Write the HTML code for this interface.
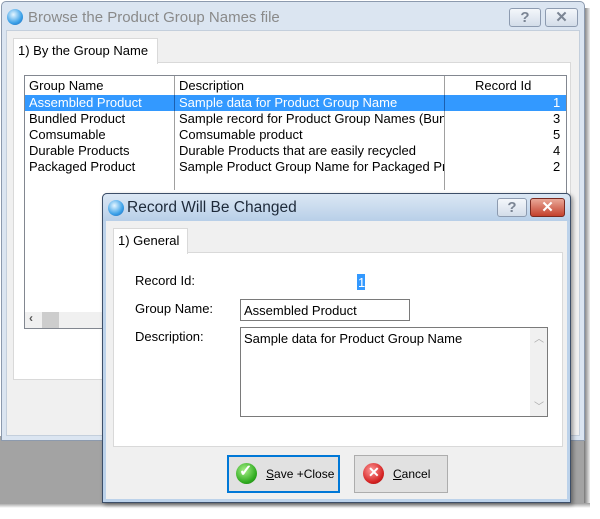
<!DOCTYPE html>
<html><head><style>
body{margin:0;width:600px;height:519px;background:#fff;position:relative;overflow:hidden;font-family:"Liberation Sans",sans-serif;font-size:13px;color:#000}
.a{position:absolute;box-sizing:border-box}
.t{position:absolute;white-space:nowrap}
.btn{position:absolute;box-sizing:border-box;border:1px solid #8d9bb0;border-radius:3px;background:linear-gradient(#f4f7fb,#d3dde9);color:#7b8594;font-weight:bold;text-align:center;font-size:15px;line-height:17px}
.cls{background:linear-gradient(#e9a898,#c4412c);border-color:#7a2a20;color:#fff}
</style></head><body>
<div class="a" style="left:0;top:436px;width:590px;height:67px;background:#a3a3a3"></div>
<div class="a" style="left:584px;top:8px;width:6px;height:495px;background:linear-gradient(90deg,#777,#eee)"></div>
<div class="a" style="left:0;top:503px;width:590px;height:5px;background:linear-gradient(#999,#fff)"></div>
<!-- outer window -->
<div class="a" style="left:1px;top:1px;width:584px;height:440px;background:#dbe5f1;border:1px solid #8c9aae;border-radius:5px 5px 0 0"></div>
<div class="a" style="left:6px;top:30px;width:574px;height:406px;background:#f0f0f0;border:1px solid #c4cfdc"></div>
<div class="a" style="left:7px;top:9px;width:16px;height:16px;border-radius:50%;background:radial-gradient(circle at 40% 35%,#e6f6ff,#3aa0e8 60%,#1a5fb0)"></div>
<div class="t" style="left:28px;top:9px;font-size:15px;color:#8a8a8a">Browse the Product Group Names file</div>
<div class="btn" style="left:509px;top:8px;width:32px;height:19px">?</div>
<div class="btn" style="left:545px;top:8px;width:33px;height:19px">✕</div>
<!-- outer tab -->
<div class="a" style="left:13px;top:62px;width:558px;height:318px;background:#fff;border:1px solid #d9d9d9"></div>
<div class="a" style="left:13px;top:38px;width:145px;height:26px;background:#fff;border:1px solid #d9d9d9;border-bottom:none"></div>
<div class="t" style="left:18px;top:43px">1) By the Group Name</div>
<!-- list -->
<div class="a" style="left:24px;top:75px;width:543px;height:254px;background:#fff;border:1px solid #828790"></div>
<div class="a" style="left:174px;top:76px;width:1px;height:114px;background:#a0a0a0"></div>
<div class="a" style="left:444px;top:76px;width:1px;height:114px;background:#a0a0a0"></div>
<div class="a" style="left:25px;top:95px;width:541px;height:16px;background:#3399ff"></div>
<div class="a" style="left:174px;top:95px;width:1px;height:16px;background:#1a5fb0"></div>
<div class="a" style="left:444px;top:95px;width:1px;height:16px;background:#1a5fb0"></div>
<div class="t" style="left:29px;top:78px">Group Name</div>
<div class="t" style="left:179px;top:78px">Description</div>
<div class="t" style="left:475px;top:78px">Record Id</div>
<div class="t" style="left:29px;top:95px;line-height:16px;color:#fff">Assembled Product</div>
<div class="t" style="left:29px;top:111px;line-height:16px">Bundled Product<br>Comsumable<br>Durable Products<br>Packaged Product</div>
<div class="t" style="left:179px;top:95px;line-height:16px;color:#fff">Sample data for Product Group Name</div>
<div class="t" style="left:179px;top:111px;line-height:16px;width:265px;overflow:hidden">Sample record for Product Group Names (Bundled)<br>Comsumable product<br>Durable Products that are easily recycled<br>Sample Product Group Name for Packaged Products</div>
<div class="t" style="left:553px;top:95px;line-height:16px;color:#fff">1</div>
<div class="t" style="left:553px;top:111px;line-height:16px">3<br>5<br>4<br>2</div>
<div class="a" style="left:25px;top:312px;width:80px;height:16px;background:#f0f0f0"></div>
<div class="a" style="left:42px;top:312px;width:17px;height:16px;background:#cdcdcd"></div>
<div class="t" style="left:29px;top:311px;font-size:12px;font-weight:bold;color:#555">‹</div>
<!-- inner dialog -->
<div class="a" style="left:102px;top:193px;width:469px;height:310px;background:#bcd2ea;border:1px solid #3c4e68;border-radius:5px 5px 0 0;box-shadow:2px 2px 4px rgba(0,0,0,.4)"></div>
<div class="a" style="left:102px;top:193px;width:469px;height:28px;background:linear-gradient(#dbe7f4,#b8cfe8);border:1px solid #3c4e68;border-bottom:none;border-radius:5px 5px 0 0"></div>
<div class="a" style="left:106px;top:221px;width:461px;height:278px;background:#f0f0f0"></div>
<div class="a" style="left:108px;top:200px;width:16px;height:16px;border-radius:50%;background:radial-gradient(circle at 40% 35%,#e6f6ff,#3aa0e8 60%,#1a5fb0)"></div>
<div class="t" style="left:127px;top:199px;font-size:15.5px;color:#1e2a3a">Record Will Be Changed</div>
<div class="btn" style="left:497px;top:198px;width:30px;height:19px">?</div>
<div class="btn cls" style="left:530px;top:198px;width:35px;height:19px">✕</div>
<div class="a" style="left:113px;top:252px;width:450px;height:195px;background:#fff;border:1px solid #d9d9d9"></div>
<div class="a" style="left:113px;top:228px;width:75px;height:26px;background:#fff;border:1px solid #d9d9d9;border-bottom:none"></div>
<div class="t" style="left:118px;top:233px">1) General</div>
<div class="t" style="left:135px;top:273px">Record Id:</div>
<div class="a" style="left:357px;top:274px;width:8px;height:16px;background:#3399ff"></div>
<div class="t" style="left:358px;top:275px;color:#fff">1</div>
<div class="t" style="left:135px;top:301px">Group Name:</div>
<div class="a" style="left:240px;top:299px;width:170px;height:22px;background:#fff;border:1px solid #7a7a7a"></div>
<div class="t" style="left:244px;top:303px">Assembled Product</div>
<div class="t" style="left:135px;top:329px">Description:</div>
<div class="a" style="left:240px;top:327px;width:308px;height:90px;background:#fff;border:1px solid #7a7a7a"></div>
<div class="a" style="left:530px;top:328px;width:17px;height:88px;background:#f0f0f0"></div>
<div class="t" style="left:534px;top:330px;font-size:10px;color:#aaa">︿</div>
<div class="t" style="left:534px;top:398px;font-size:10px;color:#aaa">﹀</div>
<div class="t" style="left:244px;top:331px">Sample data for Product Group Name</div>
<div class="a" style="left:227px;top:455px;width:113px;height:38px;background:#e1e1e1;border:2px solid #0078d7"></div>
<div class="a" style="left:236px;top:463px;width:21px;height:21px;border-radius:50%;background:radial-gradient(circle at 40% 35%,#a8f08a,#2eaa1e 65%,#1a6e10)"></div>
<div class="t" style="left:239px;top:461px;color:#fff;font-size:16px;font-weight:bold">✓</div>
<div class="t" style="left:266px;top:467px;font-size:12px"><u>S</u>ave +Close</div>
<div class="a" style="left:354px;top:455px;width:94px;height:38px;background:#e1e1e1;border:1px solid #adadad"></div>
<div class="a" style="left:363px;top:463px;width:21px;height:21px;border-radius:50%;background:radial-gradient(circle at 40% 35%,#ff9a9a,#d42222 65%,#8a1010)"></div>
<div class="t" style="left:368px;top:464px;color:#fff;font-size:14px;font-weight:bold">✕</div>
<div class="t" style="left:393px;top:467px;font-size:12px"><u>C</u>ancel</div>
</body></html>
